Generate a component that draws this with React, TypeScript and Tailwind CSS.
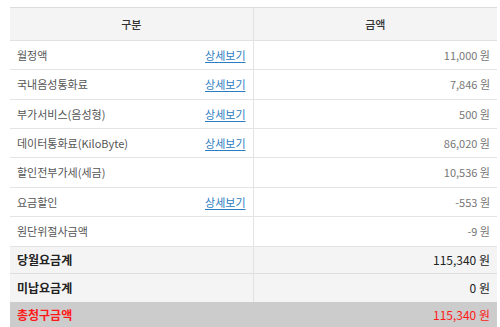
import React from "react";

type Row = {
  label: string;
  amount: string;
  detail?: boolean;
  h: number;
};

const ROWS: Row[] = [
  { label: "월정액", amount: "11,000 원", detail: true, h: 29 },
  { label: "국내음성통화료", amount: "7,846 원", detail: true, h: 30 },
  { label: "부가서비스(음성형)", amount: "500 원", detail: true, h: 29 },
  { label: "데이터통화료(KiloByte)", amount: "86,020 원", detail: true, h: 29 },
  { label: "할인전부가세(세금)", amount: "10,536 원", h: 30 },
  { label: "요금할인", amount: "-553 원", detail: true, h: 29 },
  { label: "원단위절사금액", amount: "-9 원", h: 30 },
];

const font = { fontFamily: '"Noto Sans CJK KR", "Noto Sans", sans-serif' };

export default function App() {
  return (
    <div className="w-[500px] h-[327px] overflow-hidden bg-white pt-[7px] pl-[10px] pr-[3px]" style={font}>
      <table className="w-full border-collapse table-fixed border-t border-[#dcdcdc]">
        <colgroup>
          <col className="w-[243px]" />
          <col />
        </colgroup>
        <thead>
          <tr className="h-[33px] bg-[#f4f4f4] border-b border-[#e2e2e2]">
            <th className="text-[11px] font-medium text-[#333] text-center border-r border-[#e2e2e2]">구분</th>
            <th className="text-[11px] font-medium text-[#333] text-center">금액</th>
          </tr>
        </thead>
        <tbody>
          {ROWS.map((r) => (
            <tr key={r.label} className="border-b border-[#e4e4e4]" style={{ height: r.h }}>
              <td className="border-r border-[#e4e4e4] px-[7px] p-0">
                <div className="flex items-center justify-between text-[11px] text-[#555]">
                  <span>{r.label}</span>
                  {r.detail && (
                    <a href="#" className="text-[#2b7cc0] underline underline-offset-2">
                      상세보기
                    </a>
                  )}
                </div>
              </td>
              <td className="text-right pr-[7px] text-[11px] text-[#777]">{r.amount}</td>
            </tr>
          ))}
          <tr className="h-[27px] bg-[#f4f4f4] border-b border-[#dedede]">
            <td className="border-r border-[#e2e2e2] pl-[7px] text-[12px] font-semibold text-[#222]">당월요금계</td>
            <td className="text-right pr-[7px] text-[12px] text-[#222]">115,340 원</td>
          </tr>
          <tr className="h-[28px] bg-[#f4f4f4]">
            <td className="border-r border-[#e2e2e2] pl-[7px] text-[12px] font-semibold text-[#222]">미납요금계</td>
            <td className="text-right pr-[7px] text-[12px] text-[#222]">0 원</td>
          </tr>
          <tr className="h-[27px] bg-[#cccccc]">
            <td className="pl-[7px] text-[12px] font-semibold text-[#ff1a1a]">총청구금액</td>
            <td className="text-right pr-[7px] text-[12px] text-[#ff1a1a]">115,340 원</td>
          </tr>
        </tbody>
      </table>
    </div>
  );
}
